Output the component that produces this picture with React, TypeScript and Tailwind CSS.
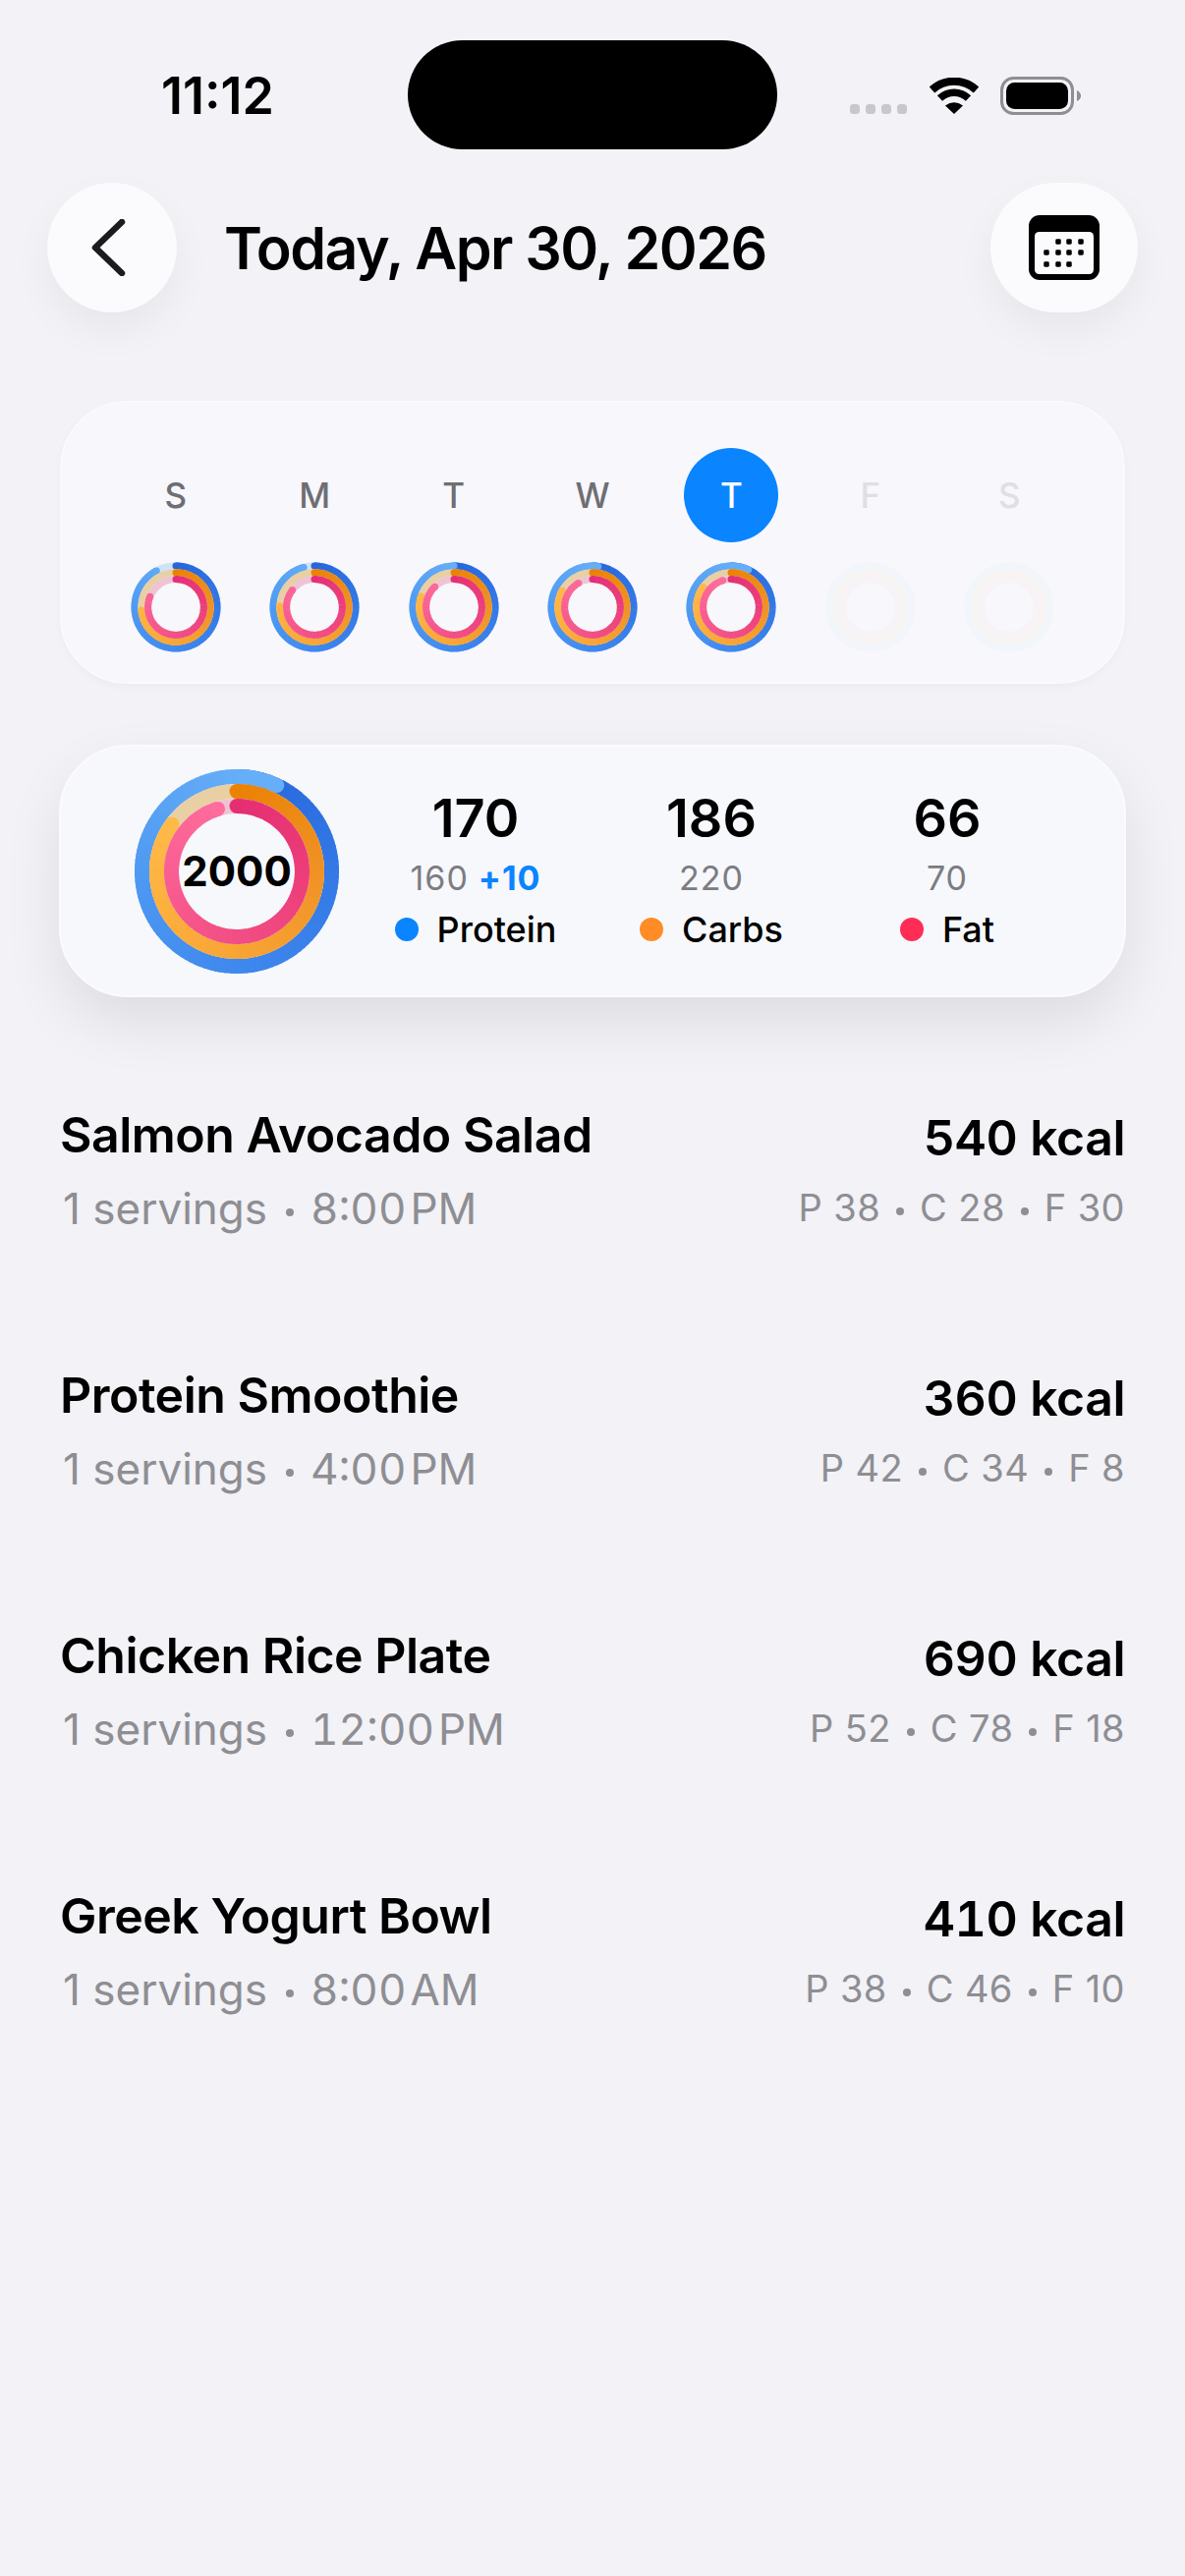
import React from "react";

type RingSpec = { r: number; sweep: number; track: string; stops: string[] };

const hex = (c: string) => [1, 3, 5].map((i) => parseInt(c.slice(i, i + 2), 16));

function mix(stops: string[], t: number) {
  const p = Math.min(Math.max(t, 0), 1) * (stops.length - 1);
  const i = Math.min(Math.floor(p), stops.length - 2);
  const a = hex(stops[i]);
  const b = hex(stops[i + 1]);
  const f = p - i;
  return `rgb(${a.map((v, k) => Math.round(v + (b[k] - v) * f)).join(",")})`;
}

const BLUE = ["#2766dc", "#3479e6", "#3f88ee", "#4f9af2", "#66aef8"];
const ORANGE = ["#ea8205", "#f09226", "#f8a535", "#feb443", "#ffc353"];
const PINK = ["#e52f72", "#ec3d79", "#f24e84", "#f95f92", "#ff709e"];

function Ring({ size, width, rings, empty }: { size: number; width: number; rings: RingSpec[]; empty?: boolean }) {
  const c = size / 2;
  const pt = (r: number, a: number) => {
    const rad = ((a - 90) * Math.PI) / 180;
    return [c + r * Math.cos(rad), c + r * Math.sin(rad)];
  };
  return (
    <svg width={size} height={size} viewBox={`0 0 ${size} ${size}`} className="block">
      {rings.map((ring, idx) => {
        const segs = [];
        if (!empty) {
          const [sx, sy] = pt(ring.r, 0);
          segs.push(<circle key="s" cx={sx} cy={sy} r={width / 2} fill={ring.stops[0]} />);
          for (let a = 0; a < ring.sweep; a += 3) {
            const end = Math.min(a + 3.8, ring.sweep);
            const [x1, y1] = pt(ring.r, a);
            const [x2, y2] = pt(ring.r, end);
            segs.push(
              <path
                key={a}
                d={`M${x1} ${y1}A${ring.r} ${ring.r} 0 0 1 ${x2} ${y2}`}
                fill="none"
                stroke={mix(ring.stops, a / 360)}
                strokeWidth={width}
              />
            );
          }
          const [ex, ey] = pt(ring.r, ring.sweep);
          segs.push(<circle key="e" cx={ex} cy={ey} r={width / 2} fill={mix(ring.stops, ring.sweep / 360)} />);
        }
        return (
          <g key={idx}>
            <circle cx={c} cy={c} r={ring.r} fill="none" stroke={ring.track} strokeWidth={width} />
            {segs}
          </g>
        );
      })}
    </svg>
  );
}

const miniRings = (a: number, b: number, d: number, track = ["#cfe2f8", "#e8d0a4", "#eec4d4"]): RingSpec[] => [
  { r: 42, sweep: a, track: track[0], stops: BLUE },
  { r: 35.2, sweep: b, track: track[1], stops: ORANGE },
  { r: 28.4, sweep: d, track: track[2], stops: PINK },
];

const DAYS = [
  { label: "S", rings: [332, 265, 292] },
  { label: "M", rings: [345, 272, 308] },
  { label: "T", rings: [360, 288, 317] },
  { label: "W", rings: [368, 299, 330] },
  { label: "T", rings: [385, 306, 343], today: true },
  { label: "F", future: true },
  { label: "S", future: true },
];

const MACROS = [
  { value: "170", goal: "160", extra: "+10", label: "Protein", dot: "bg-[#0a84ff]" },
  { value: "186", goal: "220", label: "Carbs", dot: "bg-[#ff8c26]" },
  { value: "66", goal: "70", label: "Fat", dot: "bg-[#ff2d55]" },
];

const MEALS = [
  { name: "Salmon Avocado Salad", time: "8:00", ampm: "PM", kcal: "540 kcal", p: "P 38", c: "C 28", f: "F 30" },
  { name: "Protein Smoothie", time: "4:00", ampm: "PM", kcal: "360 kcal", p: "P 42", c: "C 34", f: "F 8" },
  { name: "Chicken Rice Plate", time: "12:00", ampm: "PM", kcal: "690 kcal", p: "P 52", c: "C 78", f: "F 18" },
  { name: "Greek Yogurt Bowl", time: "8:00", ampm: "AM", kcal: "410 kcal", p: "P 38", c: "C 46", f: "F 10" },
];

function Sep({ wide }: { wide?: boolean }) {
  return (
    <span className={`inline-block size-[8px] rounded-full bg-[#8e8e93] align-middle ${wide ? "ml-[19px] mr-[17px]" : "mx-[16px]"}`} />
  );
}

export default function App() {
  return (
    <div className="h-[2622px] w-[1206px] overflow-hidden bg-[#f2f2f7] font-['Inter','Noto_Sans',sans-serif] text-black">
      {/* status bar */}
      <div className="mt-[41px] flex h-[111px] items-center pl-[164px]">
        <span className="mt-[2px] w-[115px] text-[52px] font-semibold leading-none">11:12</span>
        <div className="ml-[136px] h-[111px] w-[376px] rounded-[56px] bg-black" />
        <div className="ml-[74px] mt-[29px] flex gap-[6px]">
          {[0, 1, 2, 3].map((i) => (
            <span key={i} className="size-[10px] rounded-[3.5px] bg-[#c7c7cc]" />
          ))}
        </div>
        <svg width="50" height="37" viewBox="0 0 50 37" className="ml-[23px] mt-[2px]">
          <path d="M2.5 12.5A33 33 0 0 1 47.5 12.5" fill="none" stroke="#000" strokeWidth="8" />
          <path d="M10.5 21A21 21 0 0 1 39.5 21" fill="none" stroke="#000" strokeWidth="7.5" />
          <path d="M25 37L16 28.5Q25 22 34 28.5Z" fill="#000" />
        </svg>
        <svg width="82" height="39" viewBox="0 0 82 39" className="ml-[22px] mt-[2px]">
          <rect x="1.5" y="1.5" width="72" height="36" rx="12" fill="none" stroke="#8e8e93" strokeWidth="3" />
          <rect x="6" y="6" width="63" height="27" rx="8.5" fill="#000" />
          <path d="M78 14Q82 16 82 19.5Q82 23 78 25Z" fill="#8e8e93" />
        </svg>
      </div>

      {/* header */}
      <div className="mt-[34px] flex items-center px-[48px]">
        <div className="flex size-[132px] items-center justify-center rounded-full bg-[#fbfbfe] shadow-[0_18px_40px_rgba(0,0,0,0.05)]">
          <svg width="36" height="58" viewBox="0 0 36 58" className="-ml-[9px]">
            <path d="M32 3L5 29L32 55" fill="none" stroke="#1c1c1e" strokeWidth="6.5" strokeLinecap="round" strokeLinejoin="round" />
          </svg>
        </div>
        <h1 className="ml-[48px] text-[59px] font-semibold leading-none tracking-[-1.5px]">Today, Apr 30, 2026</h1>
        <div className="ml-auto flex h-[132px] w-[150px] items-center justify-center rounded-full bg-[#fbfbfe] shadow-[0_18px_40px_rgba(0,0,0,0.05)]">
          <svg width="72" height="66" viewBox="0 0 72 66">
            <rect width="72" height="66" rx="11" fill="#000" />
            <rect x="6" y="17" width="60" height="43" rx="4.5" fill="#fbfbfe" />
            {[
              [30, 27], [41, 27], [53, 27],
              [18, 38], [30, 38], [41, 38], [53, 38],
              [18, 50], [30, 50], [41, 50],
            ].map(([x, y]) => (
              <rect key={`${x}-${y}`} x={x - 2.75} y={y - 2.75} width="5.5" height="5.5" rx="1.4" fill="#000" />
            ))}
          </svg>
        </div>
      </div>

      {/* week card */}
      <div className="mx-[61px] mt-[90px] grid h-[288px] grid-cols-7 rounded-[68px] border-2 border-[#fafafd] bg-[#f7f7fc] px-[45px] pt-[46px] shadow-[0_3px_8px_rgba(0,0,0,0.03)]">
        {DAYS.map((d, i) => (
          <div key={i} className="flex flex-col items-center">
            <div
              className={`flex size-[96px] items-center justify-center rounded-full text-[35px] font-medium ${
                d.today ? "bg-[#0a84ff] text-white" : d.future ? "text-[#dfdfe4]" : "text-[#6e6e73]"
              }`}
            >
              {d.label}
            </div>
            <div className="mt-[20px]">
              {d.rings ? (
                <Ring size={92} width={7} rings={miniRings(d.rings[0], d.rings[1], d.rings[2])} />
              ) : (
                <Ring size={92} width={7} empty rings={miniRings(0, 0, 0, ["#f2f5fa", "#f7f5f3", "#f7f3f6"])} />
              )}
            </div>
          </div>
        ))}
      </div>

      {/* macro card */}
      <div className="mx-[60px] mt-[62px] flex h-[257px] items-center rounded-[70px] border-2 border-[#fbfbfe] bg-[#f7f8fb] pl-[75px] shadow-[0_26px_60px_rgba(0,0,0,0.09)]">
        <div className="relative size-[208px] shrink-0">
          <Ring
            size={208}
            width={15}
            rings={[
              { r: 96.5, sweep: 385, track: "#cfe2f8", stops: BLUE },
              { r: 81.5, sweep: 306, track: "#e8d0a4", stops: ORANGE },
              { r: 66.5, sweep: 343, track: "#eec4d4", stops: PINK },
            ]}
          />
          <div className="absolute inset-0 flex items-center justify-center text-[42px] font-bold">2000</div>
        </div>
        <div className="ml-[19px] grid w-[720px] grid-cols-3">
          {MACROS.map((m) => (
            <div key={m.label} className="flex flex-col items-center">
              <span className="-mt-[3px] text-[54px] font-semibold leading-[60px]">{m.value}</span>
              <span className="mt-[11px] text-[34px] leading-[40px] tracking-[1px] text-[#7c7c82]">
                {m.goal}
                {m.extra && <span className="ml-[10px] font-bold text-[#0a84ff]">{m.extra}</span>}
              </span>
              <span className="mt-[11px] flex items-center gap-[19px] text-[36px] font-medium leading-[42px]">
                <span className={`size-[24px] rounded-full ${m.dot}`} />
                {m.label}
              </span>
            </div>
          ))}
        </div>
      </div>

      {/* meals */}
      <div className="mt-[110px] flex flex-col gap-[135px] px-[61px]">
        {MEALS.map((m) => (
          <div key={m.name} className="flex h-[130px] justify-between">
            <div>
              <div className="text-[50px] font-semibold leading-[60px] tracking-[-0.5px]">{m.name}</div>
              <div className="mt-[20px] pl-[3px] text-[44px] leading-[50px] text-[#8e8e93]">
                1 servings
                <Sep wide />
                <span className="tabular-nums">{m.time}</span>
                <span className="ml-[4px]">{m.ampm}</span>
              </div>
            </div>
            <div className="flex flex-col items-end">
              <div className="mt-[1px] text-[50px] font-semibold leading-[64px] tracking-[-0.5px] tabular-nums">{m.kcal}</div>
              <div className="mt-[14px] text-[38px] leading-[50px] tracking-[0.4px] text-[#8e8e93]">
                {m.p}
                <Sep />
                {m.c}
                <Sep />
                {m.f}
              </div>
            </div>
          </div>
        ))}
      </div>
    </div>
  );
}
